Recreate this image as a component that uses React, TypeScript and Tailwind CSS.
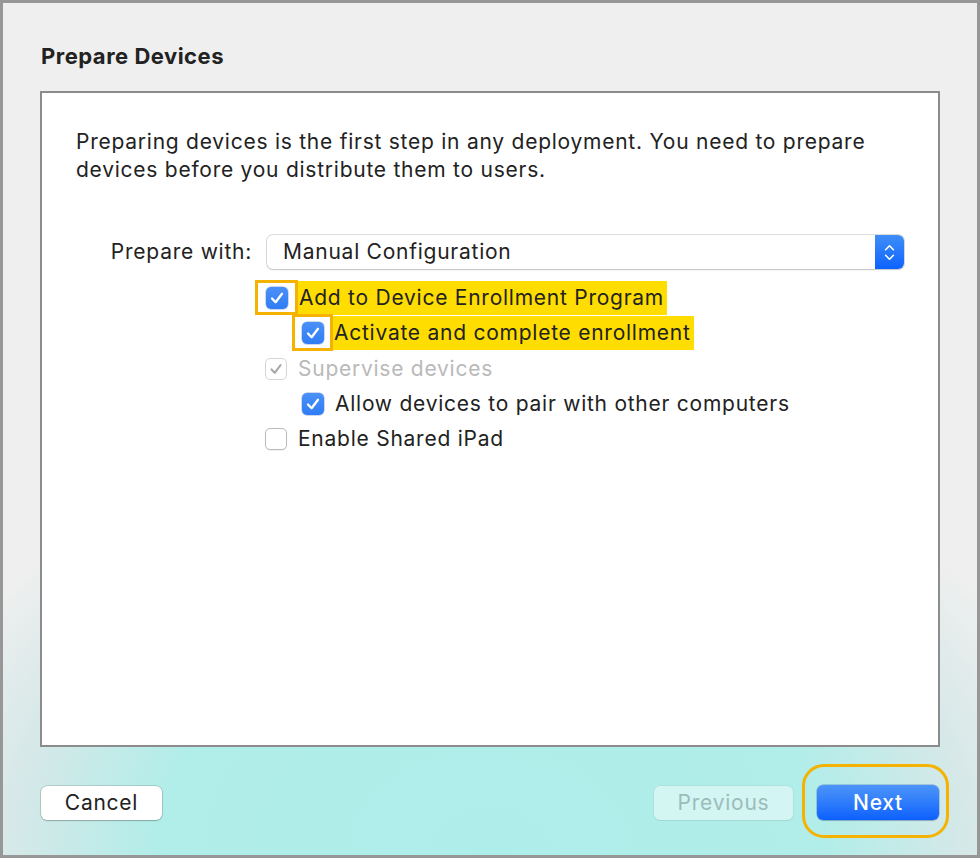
import React from "react";

type BoxState = "on" | "off" | "dim";

function Check({ color }: { color: string }) {
  return (
    <svg viewBox="0 0 22 22" className="w-[22px] h-[22px]" fill="none">
      <path d="M6 11.5 L9.6 15.2 L16 6.8" stroke={color} strokeWidth={2.3} strokeLinecap="round" strokeLinejoin="round" />
    </svg>
  );
}

function Box({ state }: { state: BoxState }) {
  if (state === "on") {
    return (
      <span className="flex w-[22px] h-[22px] shrink-0 items-center justify-center rounded-[5px] bg-gradient-to-b from-[#4a90f7] to-[#2f7cf6] shadow-[0_0_0_0.5px_rgba(0,60,160,0.4)]">
        <Check color="#ffffff" />
      </span>
    );
  }
  if (state === "dim") {
    return (
      <span className="flex w-[22px] h-[22px] shrink-0 items-center justify-center rounded-[5px] bg-white border border-[#d6d6d6]">
        <Check color="#a8a8a8" />
      </span>
    );
  }
  return <span className="block w-[22px] h-[22px] shrink-0 rounded-[5px] bg-white border border-[#b9b9b9] shadow-[0_1px_1px_rgba(0,0,0,0.06)]" />;
}

function Row({ state, indent, label, dim }: { state: BoxState; indent?: boolean; label: string; dim?: boolean }) {
  return (
    <div className={`flex h-[35px] items-center ${indent ? "pl-[37px]" : ""}`}>
      <Box state={state} />
      <span className={`ml-[11px] ${dim ? "text-[#b9b9b9]" : "text-[#222]"}`}>{label}</span>
    </div>
  );
}

export default function App() {
  return (
    <div className="h-[858px] w-[980px] border-[3px] border-[#979797] bg-[radial-gradient(ellipse_62%_52%_at_50%_100%,#aeeeea_0%,#b1ede9_55%,#d7e8e8_80%,#efefef_100%)] font-['Inter','Noto_Sans',sans-serif] text-[21px] tracking-[0.75px] text-[#222] flex flex-col overflow-hidden">
      {/* Title */}
      <div className="pl-[38px] pt-[39px] pb-[21px]">
        <h1 className="text-[22px] leading-[28px] font-bold tracking-[0.5px] text-[#222]">Prepare Devices</h1>
      </div>

      {/* Content panel */}
      <div className="mx-[37px] flex-1 border-2 border-[#8c8c8c] bg-white pt-[35px] pl-[34px] pr-[34px]">
        <p className="leading-[28px]">
          Preparing devices is the first step in any deployment. You need to prepare
          <br />
          devices before you distribute them to users.
        </p>

        <div className="mt-[51px] flex items-center">
          <div className="w-[176px] text-right">Prepare with:</div>
          <div className="ml-[15px] flex h-[34px] flex-1 items-stretch rounded-[6px] bg-white shadow-[0_0_0_1px_rgba(0,0,0,0.13),0_1px_2px_rgba(0,0,0,0.12)]">
            <div className="flex flex-1 items-center pl-[16px]">Manual Configuration</div>
            <div className="flex w-[29px] flex-col items-center justify-center gap-[3px] rounded-r-[6px] bg-gradient-to-b from-[#3f8df8] to-[#0b62fe]">
              <svg viewBox="0 0 12 8" className="w-[11px] h-[7px]" fill="none">
                <path d="M1.5 6.5 L6 2 L10.5 6.5" stroke="white" strokeWidth={1.8} strokeLinecap="round" strokeLinejoin="round" />
              </svg>
              <svg viewBox="0 0 12 8" className="w-[11px] h-[7px]" fill="none">
                <path d="M1.5 1.5 L6 6 L10.5 1.5" stroke="white" strokeWidth={1.8} strokeLinecap="round" strokeLinejoin="round" />
              </svg>
            </div>
          </div>
        </div>

        <div className="mt-[11px] ml-[179px]">
          {/* Highlighted rows */}
          <div className="flex h-[35px] items-center">
            <span className="flex h-[35px] w-[43px] items-center justify-center border-[3px] border-[#f5b200] bg-white">
              <Box state="on" />
            </span>
            <span className="flex h-[34px] items-center bg-[#ffdd00] pl-[1px] pr-[3px] text-[#222]">Add to Device Enrollment Program</span>
          </div>
          <div className="flex h-[35px] items-center pl-[37px]">
            <span className="flex h-[37px] w-[41px] shrink-0 items-center justify-center border-[3px] border-[#f5b200] bg-white">
              <Box state="on" />
            </span>
            <span className="flex h-[34px] items-center bg-[#ffdd00] pl-[1px] pr-[3px] text-[#222]">Activate and complete enrollment</span>
          </div>
          <div className="ml-[10px] mt-[1px]">
            <Row state="dim" label="Supervise devices" dim />
            <Row state="on" indent label="Allow devices to pair with other computers" />
            <Row state="off" label="Enable Shared iPad" />
          </div>
        </div>
      </div>

      {/* Footer */}
      <div className="flex h-[108px] shrink-0 items-center px-[38px] pt-[3px]">
        <button className="h-[34px] w-[121px] rounded-[6px] bg-white text-[#222] shadow-[0_0_0_0.5px_rgba(0,0,0,0.25),0_1px_1.5px_rgba(0,0,0,0.18)]">
          Cancel
        </button>
        <div className="flex-1" />
        <button className="h-[34px] w-[139px] rounded-[6px] bg-white/45 text-[#9cbcba] shadow-[0_0_0_0.5px_rgba(0,0,0,0.08),0_1px_1px_rgba(0,0,0,0.06)]">
          Previous
        </button>
        <div className="relative ml-[24px]">
          <button className="h-[35px] w-[122px] rounded-[6px] bg-gradient-to-b from-[#4c94f8] to-[#0b60fe] font-medium text-white shadow-[0_0_0_0.5px_rgba(0,50,160,0.4),0_1px_1px_rgba(0,0,0,0.15)]">
            Next
          </button>
          <span className="pointer-events-none absolute left-[-15px] right-[-10px] top-[-21px] bottom-[-18px] rounded-[22px] border-[3px] border-[#f5b200]" />
        </div>
      </div>
    </div>
  );
}
